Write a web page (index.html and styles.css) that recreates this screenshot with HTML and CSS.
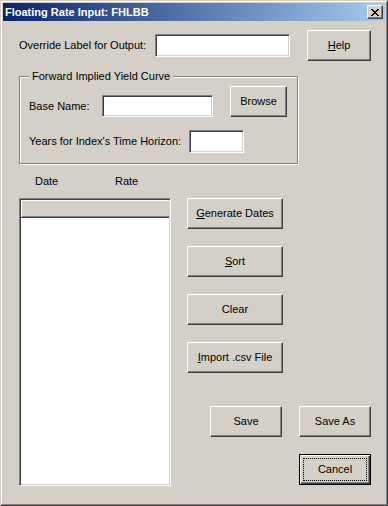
FILE: index.html
```html
<!DOCTYPE html>
<html>
<head>
<meta charset="utf-8">
<title>Floating Rate Input: FHLBB</title>
<link rel="stylesheet" href="styles.css">
</head>
<body>
<div class="window">
  <div class="frame">
    <div class="titlebar">
      <span class="title">Floating Rate Input: FHLBB</span>
      <button class="close" type="button" aria-label="Close">
        <svg width="8" height="7" viewBox="0 0 8 7" shape-rendering="crispEdges">
          <path d="M0 0h2v1h-2zM6 0h2v1h-2zM1 1h2v1h-2zM5 1h2v1h-2zM2 2h4v1h-4zM3 3h2v1h-2zM2 4h4v1h-4zM1 5h2v1h-2zM5 5h2v1h-2zM0 6h2v1h-2zM6 6h2v1h-2z" fill="#000"/>
        </svg>
      </button>
    </div>
    <div class="client">
      <div class="row-override">
        <span class="lbl lbl-override">Override Label for Output:</span>
        <div class="field f-override"></div>
        <button class="btn btn-help" type="button"><u>H</u>elp</button>
      </div>

      <div class="group">
        <span class="legend">Forward Implied Yield Curve</span>
        <div class="row-base">
          <span class="lbl lbl-base">Base Name:</span>
          <div class="field f-base"></div>
          <button class="btn btn-browse" type="button">Browse</button>
        </div>
        <div class="row-years">
          <span class="lbl lbl-years">Years for Index's Time Horizon:</span>
          <div class="field f-years"></div>
        </div>
      </div>

      <div class="cols">
        <span class="col-date">Date</span>
        <span class="col-rate">Rate</span>
      </div>

      <div class="lower">
        <div class="list">
          <div class="list-head"></div>
          <div class="list-body"></div>
        </div>
        <div class="actions">
          <button class="btn btn-side" type="button"><u>G</u>enerate Dates</button>
          <button class="btn btn-side" type="button"><u>S</u>ort</button>
          <button class="btn btn-side" type="button">Clear</button>
          <button class="btn btn-side" type="button"><u>I</u>mport .csv File</button>
          <div class="save-row">
            <button class="btn btn-save" type="button">Save</button>
            <button class="btn btn-save" type="button">Save As</button>
          </div>
          <button class="btn btn-save btn-default" type="button">Cancel</button>
        </div>
      </div>
    </div>
  </div>
</div>
</body>
</html>
```

FILE: styles.css
```css
html, body {
  margin: 0;
  padding: 0;
  background: #D4D0C8;
}

body {
  font-family: "Liberation Sans", Arial, sans-serif;
  font-size: 11px;
  color: #000;
}

.window {
  width: 388px;
  height: 506px;
  box-sizing: border-box;
  border: 1px solid;
  border-color: #D4D0C8 #404040 #404040 #D4D0C8;
  background: #D4D0C8;
}

.frame {
  height: 100%;
  box-sizing: border-box;
  border: 1px solid;
  border-color: #fff #808080 #808080 #fff;
  padding: 1px;
  display: flex;
  flex-direction: column;
}

.titlebar {
  height: 18px;
  flex: none;
  display: flex;
  align-items: center;
  padding-left: 2px;
  padding-right: 2px;
  background: linear-gradient(to right, #0A246A, #A6CAF0);
}

.title {
  flex: 1;
  color: #fff;
  font-weight: bold;
  font-size: 11px;
  line-height: 13px;
  white-space: nowrap;
}

.close {
  width: 16px;
  height: 14px;
  box-sizing: border-box;
  padding: 0;
  margin: 0;
  background: #D4D0C8;
  border: 1px solid;
  border-color: #fff #404040 #404040 #fff;
  box-shadow: inset -1px -1px #808080;
  display: flex;
  align-items: center;
  justify-content: center;
}

.close svg {
  display: block;
  margin-left: -1px;
}

.client {
  flex: 1;
  padding-left: 16px;
  display: flex;
  flex-direction: column;
  align-items: flex-start;
}

.lbl {
  white-space: nowrap;
  line-height: 13px;
}

.field {
  box-sizing: border-box;
  background: #fff;
  border: 1px solid;
  border-color: #808080 #fff #fff #808080;
  box-shadow: inset 1px 1px #404040, inset -1px -1px #D4D0C8;
}

.btn {
  box-sizing: border-box;
  margin: 0;
  padding: 0;
  font-family: "Liberation Sans", Arial, sans-serif;
  font-size: 11px;
  color: #000;
  background: #D4D0C8;
  border: 1px solid;
  border-color: #fff #404040 #404040 #fff;
  box-shadow: inset -1px -1px #808080;
  height: 31px;
  line-height: 13px;
  text-align: center;
}

.btn u {
  text-decoration: underline;
  text-underline-offset: 1px;
}

/* Row 1 */
.row-override {
  margin-top: 9px;
  height: 31px;
  display: flex;
  align-items: center;
}

.lbl-override {
  width: 136px;
}

.f-override {
  width: 135px;
  height: 23px;
}

.btn-help {
  width: 64px;
  margin-left: 17px;
}

/* Group box */
.group {
  position: relative;
  margin-top: 15px;
  width: 279px;
  box-sizing: border-box;
  border: 1px solid #808080;
  box-shadow: 1px 1px 0 #fff, inset 1px 1px 0 #fff;
  padding: 9px 0 10px 9px;
}

.legend {
  position: absolute;
  top: -7px;
  left: 9px;
  padding: 0 3px;
  background: #D4D0C8;
  line-height: 13px;
  white-space: nowrap;
}

.row-base {
  display: flex;
  align-items: flex-start;
  height: 31px;
}

.lbl-base {
  width: 73px;
  margin-top: 9px;
  line-height: 22px;
}

.f-base {
  width: 111px;
  height: 22px;
  margin-top: 9px;
}

.btn-browse {
  width: 57px;
  margin-left: 17px;
}

.row-years {
  margin-top: 13px;
  display: flex;
  align-items: center;
  height: 23px;
}

.lbl-years {
  width: 160px;
}

.f-years {
  width: 55px;
  height: 23px;
}

/* Column titles */
.cols {
  margin-top: 10px;
  height: 14px;
  line-height: 14px;
  padding-left: 16px;
  display: flex;
}

.col-date {
  width: 80px;
}

/* Lower area */
.lower {
  margin-top: 10px;
  display: flex;
  align-items: flex-start;
}

.list {
  width: 152px;
  height: 288px;
  box-sizing: border-box;
  border: 1px solid;
  border-color: #808080 #fff #fff #808080;
  box-shadow: inset 1px 1px #404040, inset -1px -1px #D4D0C8;
  padding: 1px 1px 1px 1px;
  display: flex;
  flex-direction: column;
}

.list-head {
  height: 18px;
  flex: none;
  box-sizing: border-box;
  background: #D4D0C8;
  border-bottom: 1px solid #404040;
  box-shadow: inset 1px 1px #fff, inset 0 -1px #808080;
}

.list-body {
  flex: 1;
  background: #fff;
}

.actions {
  margin-left: 16px;
  width: 184px;
  display: flex;
  flex-direction: column;
  align-items: flex-start;
  gap: 17px;
}

.btn-side {
  width: 96px;
}

.save-row {
  margin-top: 16px;
  align-self: stretch;
  display: flex;
  justify-content: flex-end;
  gap: 17px;
}

.btn-save {
  width: 72px;
}

.btn-default {
  align-self: flex-end;
  border: 1px solid #000;
  box-shadow: inset 1px 1px #fff, inset -1px -1px #404040, inset -2px -2px #808080;
  outline: 1px dotted #000;
  outline-offset: -5px;
}
```
